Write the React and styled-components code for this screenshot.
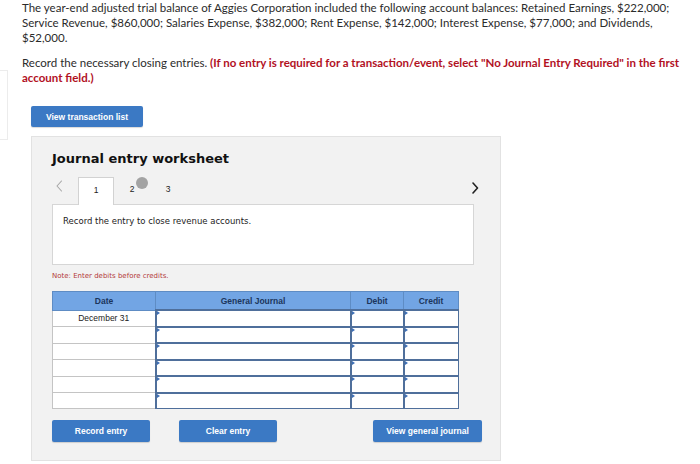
import styled, { createGlobalStyle } from 'styled-components'

const GlobalStyle = createGlobalStyle`
    body {
        margin: 0;
        background: #ffffff;
        font-family: "Liberation Sans", Arial, sans-serif;
    }
`

const rows = ['December 31', '', '', '', '', '']

function Chevron({ dir, color, weight }) {
    const d = dir === 'left' ? 'M5.5 1 L1 6 L5.5 11' : 'M1 1 L5.5 6 L1 11'
    return (
        <svg width="7" height="12" viewBox="0 0 7 12">
            <path d={d} fill="none" stroke={color} strokeWidth={weight} strokeLinecap="round" strokeLinejoin="round" />
        </svg>
    )
}

export default function App() {
    return (
        <Page>
            <GlobalStyle />
            <Rail />
            <Main>
                <Question>
                    The year-end adjusted trial balance of Aggies Corporation included the following account balances: Retained Earnings, $222,000; Service Revenue, $860,000; Salaries Expense, $382,000; Rent Expense, $142,000; Interest Expense, $77,000; and Dividends, $52,000.
                </Question>
                <Question>
                    Record the necessary closing entries. <Warn>(If no entry is required for a transaction/event, select "No Journal Entry Required" in the first account field.)</Warn>
                </Question>

                <Body>
                    <Button $w={112}>View transaction list</Button>

                    <Worksheet>
                        <Title>Journal entry worksheet</Title>

                        <TabRow>
                            <Arrow $side="left" $top={3}>
                                <Chevron dir="left" color="#a6a6a6" weight={1.1} />
                            </Arrow>
                            <Tab $active>1</Tab>
                            <Tab>2<Dot /></Tab>
                            <Tab>3</Tab>
                            <Spacer />
                            <Arrow $side="right" $top={5}>
                                <Chevron dir="right" color="#222" weight={1.6} />
                            </Arrow>
                        </TabRow>

                        <Prompt>Record the entry to close revenue accounts.</Prompt>

                        <Note>Note: Enter debits before credits.</Note>

                        <Table>
                            <thead>
                                <tr>
                                    <Th $w={102}>Date</Th>
                                    <Th $w={194}>General Journal</Th>
                                    <Th $w={52}>Debit</Th>
                                    <Th $w={54}>Credit</Th>
                                </tr>
                            </thead>
                            <tbody>
                                {rows.map((d, i) => (
                                    <tr key={i}>
                                        <DateCell>{d}</DateCell>
                                        <InputCell />
                                        <InputCell />
                                        <InputCell />
                                    </tr>
                                ))}
                            </tbody>
                        </Table>

                        <Actions>
                            <Button $w={98} $h={22}>Record entry</Button>
                            <Button $w={98} $h={22}>Clear entry</Button>
                            <Spacer />
                            <Button $w={109} $h={22}>View general journal</Button>
                        </Actions>
                    </Worksheet>
                </Body>
            </Main>
        </Page>
    )
}

const Page = styled.div`
    display: flex;
    width: 700px;
    height: 464px;
    overflow: hidden;
`

const Rail = styled.div`
    flex: 0 0 8px;
    height: 70px;
    margin-top: 70px;
    border: 1px solid #ececec;
    border-left: none;
    box-sizing: border-box;
`

const Main = styled.div`
    flex: 1;
    padding-left: 14px;
`

const Question = styled.p`
    margin: 0 0 10px;
    width: 666px;
    font-family: Lato, "Open Sans", sans-serif;
    font-size: 11.5px;
    line-height: 15px;
    color: #2b2b2b;
`

const Warn = styled.b`
    color: #b2111f;
`

const Body = styled.div`
    padding: 11px 0 0 9px;
`

const Button = styled.div`
    display: flex;
    align-items: center;
    justify-content: center;
    width: ${p => p.$w}px;
    height: ${p => p.$h || 21}px;
    border-radius: 2px;
    background: #3b79c4;
    box-shadow: 0 1px 1px rgba(0,0,0,0.15);
    color: #ffffff;
    font-family: "Liberation Sans", Arial, sans-serif;
    font-weight: bold;
    font-size: 8.5px;
`

const Worksheet = styled.div`
    margin-top: 9px;
    width: 470px;
    box-sizing: border-box;
    padding: 14px 20px 18px;
    background: #f2f2f2;
    border: 1px solid #e2e2e2;
`

const Title = styled.h2`
    margin: 0;
    font-family: "DejaVu Sans", Verdana, sans-serif;
    font-size: 13px;
    line-height: 16px;
    font-weight: bold;
    color: #111111;
`

const TabRow = styled.div`
    display: flex;
    align-items: flex-end;
    margin-top: 10px;
    height: 27px;
    width: 430px;
`

const Arrow = styled.div`
    display: flex;
    justify-content: ${p => p.$side === 'left' ? 'flex-start' : 'flex-end'};
    align-self: flex-start;
    width: 26px;
    margin-top: ${p => p.$top}px;
    padding: ${p => p.$side === 'left' ? '0 0 0 4px' : '0 3px 0 0'};
    box-sizing: border-box;
`

const Tab = styled.div`
    position: relative;
    display: flex;
    align-items: center;
    justify-content: center;
    width: 36px;
    height: ${p => p.$active ? 28 : 27}px;
    margin-bottom: ${p => p.$active ? -1 : 0}px;
    padding-bottom: 4px;
    box-sizing: border-box;
    background: ${p => p.$active ? '#ffffff' : 'transparent'};
    border: 1px solid ${p => p.$active ? '#d2d2d2' : 'transparent'};
    border-bottom: none;
    font-family: "Liberation Sans", Arial, sans-serif;
    font-size: 8.5px;
    color: #222;
    z-index: 1;
`

const Dot = styled.span`
    position: absolute;
    left: 21px;
    top: -1px;
    width: 12px;
    height: 12px;
    border-radius: 50%;
    background: #a3a3a3;
`

const Spacer = styled.div`
    flex: 1;
`

const Prompt = styled.div`
    height: 61px;
    box-sizing: border-box;
    width: 422px;
    padding: 10px 10px;
    background: #ffffff;
    border: 1px solid #d6d6d6;
    font-family: "DejaVu Sans", Verdana, sans-serif;
    font-size: 8.5px;
    line-height: 12px;
    color: #222;
`

const Note = styled.div`
    margin: 6px 0 10px;
    font-family: "DejaVu Sans", Verdana, sans-serif;
    font-size: 7px;
    line-height: 10px;
    color: #b23a3a;
`

const Table = styled.table`
    border-collapse: collapse;
    table-layout: fixed;
    width: 402px;
`

const Th = styled.th`
    width: ${p => p.$w}px;
    height: 17px;
    padding: 0;
    background: #72a5e4;
    border: 1px solid #5e8cc4;
    font-family: "Liberation Sans", Arial, sans-serif;
    font-size: 8.5px;
    font-weight: bold;
    color: #1c355c;
`

const DateCell = styled.td`
    height: 14.5px;
    padding: 0;
    background: #ffffff;
    border: 1px solid #c4c4c4;
    text-align: center;
    font-family: "Liberation Sans", Arial, sans-serif;
    font-size: 8.5px;
    line-height: 10px;
    color: #222;
`

const InputCell = styled.td`
    position: relative;
    height: 14.5px;
    padding: 0;
    background: #ffffff;
    border: 1px solid #4f6f9b;
    border-top-width: 2px;
    border-left-width: 2px;

    &::before {
        content: '';
        position: absolute;
        left: 0;
        top: 0;
        border-top: 2px solid transparent;
        border-bottom: 2px solid transparent;
        border-left: 3px solid #3e6fb5;
    }
`

const Actions = styled.div`
    display: flex;
    gap: 29px;
    margin-top: 11px;
    width: 430px;
`
